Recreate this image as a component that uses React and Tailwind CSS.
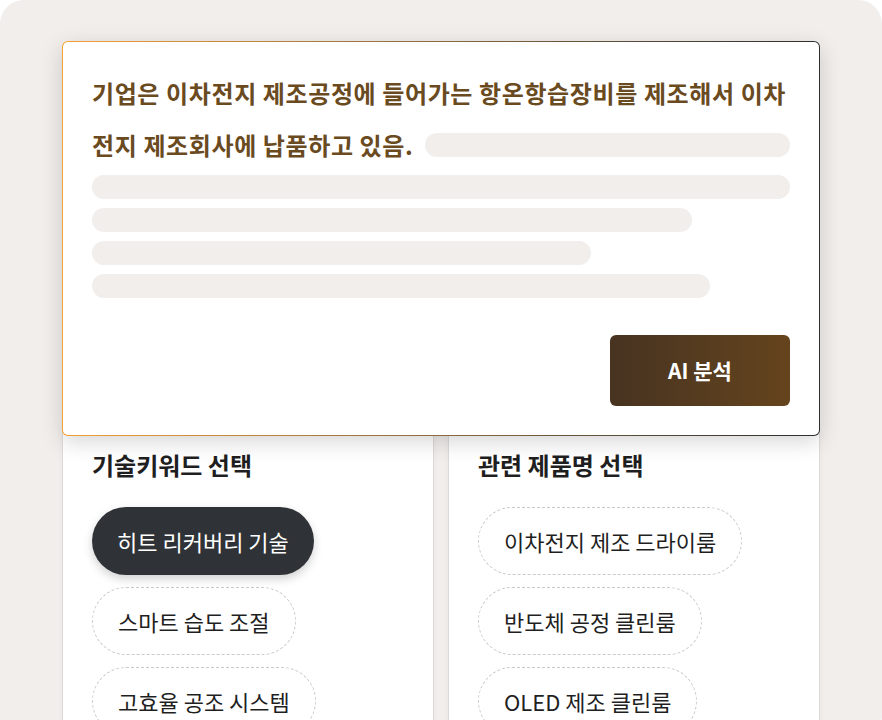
import React, { useState } from "react";

const keywords = ["히트 리커버리 기술", "스마트 습도 조절", "고효율 공조 시스템"];
const products = ["이차전지 제조 드라이룸", "반도체 공정 클린룸", "OLED 제조 클린룸"];

const Pill = ({ label, active, onClick }) => (
  <button
    type="button"
    onClick={onClick}
    className={`h-[68px] px-[25px] rounded-full text-[22px] leading-none whitespace-nowrap ${
      active
        ? "bg-[#2f3337] text-white shadow-[0_4px_10px_rgba(0,0,0,0.18)]"
        : "border-[1.5px] border-dashed border-[#c9c9c9] text-[#1f1f1f] bg-white"
    }`}
  >
    {label}
  </button>
);

const App = () => {
  const [keyword, setKeyword] = useState(0);
  const [product, setProduct] = useState(null);

  return (
    <div className="bg-white w-[882px] h-[720px] overflow-hidden font-['Noto_Sans_CJK_KR','Noto_Sans',sans-serif]">
      <div className="bg-[#f1eeec] w-[882px] h-[740px] rounded-[24px] pt-[41px] px-[62px]">
        {/* Summary card */}
        <div className="relative z-10 rounded-[6px] p-px bg-gradient-to-r from-[#f6a033] via-[#8a6a40] to-[#2e2e2e] shadow-[0_6px_22px_rgba(0,0,0,0.16)]">
          <div className="rounded-[5px] bg-white px-[29px] pt-[25px] pb-[29px]">
            <p className="text-[24px] font-bold leading-[52px] text-[#6a4a1f] tracking-[0.025em] whitespace-nowrap">
              기업은 이차전지 제조공정에 들어가는 항온항습장비를 제조해서 이차
            </p>
            <div className="flex items-center gap-[12px]">
              <p className="text-[24px] font-bold leading-[52px] text-[#6a4a1f] tracking-[0.025em] whitespace-nowrap">
                전지 제조회사에 납품하고 있음.
              </p>
              <div className="flex-1 h-[24px] rounded-full bg-[#f1eeec]" />
            </div>
            <div className="mt-[4px] flex flex-col gap-[9px]">
              <div className="h-[24px] w-full rounded-full bg-[#f1eeec]" />
              <div className="h-[24px] w-[600px] rounded-full bg-[#f1eeec]" />
              <div className="h-[24px] w-[499px] rounded-full bg-[#f1eeec]" />
              <div className="h-[24px] w-[618px] rounded-full bg-[#f1eeec]" />
            </div>
            <div className="mt-[37px] flex justify-end">
              <button
                type="button"
                className="w-[180px] h-[71px] rounded-[6px] bg-gradient-to-r from-[#473320] to-[#65441d] text-white text-[21px] font-bold"
              >
                AI 분석
              </button>
            </div>
          </div>
        </div>

        {/* Selection columns */}
        <div className="flex gap-[14px] -mt-[10px]">
          <div className="w-[372px] h-[320px] bg-white border border-[#dedad8] pt-[23px] px-[29px] shadow-[0_2px_6px_rgba(0,0,0,0.04)]">
            <h2 className="text-[24px] font-bold text-[#1f1f1f] leading-[30px]">기술키워드 선택</h2>
            <div className="mt-[27px] flex flex-col items-start gap-[12px]">
              {keywords.map((k, i) => (
                <Pill key={k} label={k} active={keyword === i} onClick={() => setKeyword(i)} />
              ))}
            </div>
          </div>
          <div className="w-[372px] h-[320px] bg-white border border-[#dedad8] pt-[23px] px-[29px] shadow-[0_2px_6px_rgba(0,0,0,0.04)]">
            <h2 className="text-[24px] font-bold text-[#1f1f1f] leading-[30px]">관련 제품명 선택</h2>
            <div className="mt-[27px] flex flex-col items-start gap-[12px]">
              {products.map((p, i) => (
                <Pill key={p} label={p} active={product === i} onClick={() => setProduct(i)} />
              ))}
            </div>
          </div>
        </div>
      </div>
    </div>
  );
};

export default App;
